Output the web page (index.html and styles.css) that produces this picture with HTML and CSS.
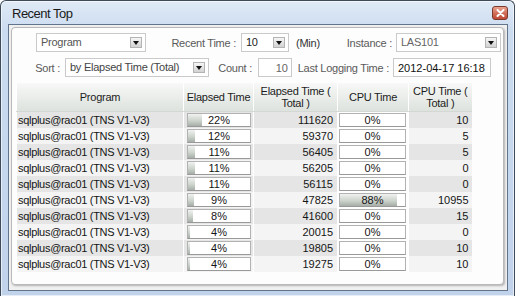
FILE: index.html
```
<!DOCTYPE html>
<html lang="en">
<head>
    <meta charset="UTF-8">
    <meta name="viewport" content="width=device-width, initial-scale=1.0">
    <title>Recent Top</title>
    <link rel="stylesheet" href="styles.css">
</head>
<body>
    <div class="window">
        <div class="titlebar">
            <span class="title">Recent Top</span>
            <span class="close-btn">
                <svg width="9" height="8" viewBox="0 0 9 8"><path d="M1.5 1 L7.5 7 M7.5 1 L1.5 7" stroke="#fff" stroke-width="2" stroke-linecap="round"/></svg>
            </span>
        </div>
        <div class="client">
            <div class="panel">
                <div class="filter-row">
                    <div class="select sel-type"><span>Program</span><i class="drop"></i></div>
                    <span class="label lbl-recent">Recent Time :</span>
                    <div class="select sel-time"><span class="dark">10</span><i class="drop"></i></div>
                    <span class="unit">(Min)</span>
                    <span class="label lbl-instance">Instance :</span>
                    <div class="select sel-instance"><span>LAS101</span><i class="drop"></i></div>
                </div>
                <div class="filter-row">
                    <span class="label lbl-sort">Sort :</span>
                    <div class="select sel-sort"><span>by Elapsed Time (Total)</span><i class="drop"></i></div>
                    <span class="label lbl-count">Count :</span>
                    <input class="field fld-count" type="text" value="10">
                    <span class="label lbl-logging">Last Logging Time :</span>
                    <input class="field fld-logging" type="text" value="2012-04-17 16:18">
                </div>
                <table class="grid">
                    <colgroup>
                        <col class="c-program">
                        <col class="c-elapsed">
                        <col class="c-elapsed-total">
                        <col class="c-cpu">
                        <col class="c-cpu-total">
                    </colgroup>
                    <thead>
                        <tr>
                            <th>Program</th>
                            <th>Elapsed Time</th>
                            <th>Elapsed Time (<br>Total )</th>
                            <th>CPU Time</th>
                            <th>CPU Time (<br>Total )</th>
                        </tr>
                    </thead>
                    <tbody>
                        <tr>
                            <td class="prog">sqlplus@rac01 (TNS V1-V3)</td>
                            <td class="pct"><div class="bar"><div class="bar-fill" style="width:22%"></div><span class="bar-text">22%</span></div></td>
                            <td class="num">111620</td>
                            <td class="pct cpu"><div class="bar"><div class="bar-fill" style="width:0%"></div><span class="bar-text">0%</span></div></td>
                            <td class="num last">10</td>
                        </tr>
                        <tr>
                            <td class="prog">sqlplus@rac01 (TNS V1-V3)</td>
                            <td class="pct"><div class="bar"><div class="bar-fill" style="width:12%"></div><span class="bar-text">12%</span></div></td>
                            <td class="num">59370</td>
                            <td class="pct cpu"><div class="bar"><div class="bar-fill" style="width:0%"></div><span class="bar-text">0%</span></div></td>
                            <td class="num last">5</td>
                        </tr>
                        <tr>
                            <td class="prog">sqlplus@rac01 (TNS V1-V3)</td>
                            <td class="pct"><div class="bar"><div class="bar-fill" style="width:11%"></div><span class="bar-text">11%</span></div></td>
                            <td class="num">56405</td>
                            <td class="pct cpu"><div class="bar"><div class="bar-fill" style="width:0%"></div><span class="bar-text">0%</span></div></td>
                            <td class="num last">5</td>
                        </tr>
                        <tr>
                            <td class="prog">sqlplus@rac01 (TNS V1-V3)</td>
                            <td class="pct"><div class="bar"><div class="bar-fill" style="width:11%"></div><span class="bar-text">11%</span></div></td>
                            <td class="num">56205</td>
                            <td class="pct cpu"><div class="bar"><div class="bar-fill" style="width:0%"></div><span class="bar-text">0%</span></div></td>
                            <td class="num last">0</td>
                        </tr>
                        <tr>
                            <td class="prog">sqlplus@rac01 (TNS V1-V3)</td>
                            <td class="pct"><div class="bar"><div class="bar-fill" style="width:11%"></div><span class="bar-text">11%</span></div></td>
                            <td class="num">56115</td>
                            <td class="pct cpu"><div class="bar"><div class="bar-fill" style="width:0%"></div><span class="bar-text">0%</span></div></td>
                            <td class="num last">0</td>
                        </tr>
                        <tr>
                            <td class="prog">sqlplus@rac01 (TNS V1-V3)</td>
                            <td class="pct"><div class="bar"><div class="bar-fill" style="width:9%"></div><span class="bar-text">9%</span></div></td>
                            <td class="num">47825</td>
                            <td class="pct cpu"><div class="bar"><div class="bar-fill" style="width:88%"></div><span class="bar-text">88%</span></div></td>
                            <td class="num last">10955</td>
                        </tr>
                        <tr>
                            <td class="prog">sqlplus@rac01 (TNS V1-V3)</td>
                            <td class="pct"><div class="bar"><div class="bar-fill" style="width:8%"></div><span class="bar-text">8%</span></div></td>
                            <td class="num">41600</td>
                            <td class="pct cpu"><div class="bar"><div class="bar-fill" style="width:0%"></div><span class="bar-text">0%</span></div></td>
                            <td class="num last">15</td>
                        </tr>
                        <tr>
                            <td class="prog">sqlplus@rac01 (TNS V1-V3)</td>
                            <td class="pct"><div class="bar"><div class="bar-fill" style="width:4%"></div><span class="bar-text">4%</span></div></td>
                            <td class="num">20015</td>
                            <td class="pct cpu"><div class="bar"><div class="bar-fill" style="width:0%"></div><span class="bar-text">0%</span></div></td>
                            <td class="num last">0</td>
                        </tr>
                        <tr>
                            <td class="prog">sqlplus@rac01 (TNS V1-V3)</td>
                            <td class="pct"><div class="bar"><div class="bar-fill" style="width:4%"></div><span class="bar-text">4%</span></div></td>
                            <td class="num">19805</td>
                            <td class="pct cpu"><div class="bar"><div class="bar-fill" style="width:0%"></div><span class="bar-text">0%</span></div></td>
                            <td class="num last">10</td>
                        </tr>
                        <tr>
                            <td class="prog">sqlplus@rac01 (TNS V1-V3)</td>
                            <td class="pct"><div class="bar"><div class="bar-fill" style="width:4%"></div><span class="bar-text">4%</span></div></td>
                            <td class="num">19275</td>
                            <td class="pct cpu"><div class="bar"><div class="bar-fill" style="width:0%"></div><span class="bar-text">0%</span></div></td>
                            <td class="num last">10</td>
                        </tr>
                    </tbody>
                </table>
            </div>
        </div>
    </div>
</body>
</html>
```

FILE: styles.css
```
body {
    margin: 0;
    font-family: "Liberation Sans", Arial, sans-serif;
    font-size: 11px;
    color: #151515;
}
.window {
    width: 515px;
    height: 296px;
    box-sizing: border-box;
    border: 1px solid #3d4b5b;
    border-bottom: none;
    border-radius: 6px 6px 0 0;
    background: linear-gradient(#e0eaf6, #cbdcf0 30px, #c0d3eb);
    box-shadow: inset 0 0 0 1px rgba(255, 255, 255, 0.6);
    padding: 0 6px 0 7px;
}
.titlebar {
    height: 23px;
    display: flex;
    justify-content: space-between;
    align-items: flex-start;
    padding-left: 4px;
}
.title {
    font-size: 13px;
    letter-spacing: -0.5px;
    line-height: 25px;
    color: #1a1a1a;
}
.close-btn {
    width: 16px;
    height: 14px;
    margin-top: 5px;
    box-sizing: border-box;
    border: 1px solid #7c3a2e;
    border-radius: 3px;
    background: linear-gradient(#eaa48f, #d2705b 50%, #bf4a36);
    display: flex;
    align-items: center;
    justify-content: center;
}
.client {
    border: 1px solid #62748a;
    background: #f0f0f0;
    padding: 2px 3px 5px 2px;
}
.panel {
    border: 1px solid #b9b9b9;
    border-radius: 4px;
    background: #fdfdfd;
    box-shadow: 1px 1px 2px rgba(0, 0, 0, 0.25);
    padding: 5px 0 12px 0;
}
.filter-row {
    display: flex;
    align-items: center;
    height: 19px;
    margin-bottom: 6px;
    letter-spacing: -0.25px;
}
.label {
    box-sizing: border-box;
    text-align: right;
    color: #5a5a5a;
    white-space: nowrap;
}
.select {
    position: relative;
    box-sizing: border-box;
    height: 19px;
    border: 1px solid #cacaca;
    background: #fff;
    color: #555;
    padding-left: 4px;
    line-height: 17px;
    white-space: nowrap;
}
.select .dark {
    color: #222;
}
.drop {
    position: absolute;
    right: 3px;
    top: 3px;
    width: 12px;
    height: 11px;
    box-sizing: border-box;
    border: 1px solid #b4b4b4;
    background: linear-gradient(#f6f6f6, #d2d2d2);
}
.drop::after {
    content: "";
    position: absolute;
    left: 2px;
    top: 3px;
    border-left: 3px solid transparent;
    border-right: 3px solid transparent;
    border-top: 4px solid #111;
}
.field {
    box-sizing: border-box;
    height: 19px;
    border: 1px solid #cacaca;
    background: #fff;
    font-family: "Liberation Sans", Arial, sans-serif;
    font-size: 11px;
    padding: 0 4px;
    margin: 0;
}
.sel-type { margin-left: 24px; width: 110px; }
.lbl-recent { width: 95px; padding-right: 5px; }
.sel-time { width: 48px; }
.unit { width: 51px; padding-left: 7px; box-sizing: border-box; color: #333; }
.lbl-instance { width: 56px; padding-right: 4px; }
.sel-instance { width: 105px; color: #666; }
.lbl-sort { width: 53px; padding-right: 5px; }
.sel-sort { width: 144px; color: #444; }
.lbl-count { width: 49px; padding-right: 6px; }
.fld-count { width: 34px; text-align: right; color: #666; padding-right: 3px; }
.lbl-logging { width: 101px; padding-right: 4px; }
.fld-logging { width: 98px; color: #111; }

.grid {
    border-collapse: collapse;
    table-layout: fixed;
    margin-left: 4px;
    width: 455px;
}
.c-program { width: 167px; }
.c-elapsed { width: 70px; }
.c-elapsed-total { width: 84px; }
.c-cpu { width: 71px; }
.c-cpu-total { width: 63px; }
.grid th {
    height: 28px;
    padding: 0;
    font-weight: normal;
    line-height: 12px;
    color: #1c1c1c;
    letter-spacing: -0.25px;
    background: linear-gradient(#f7f8f7, #dde2dd);
    border-left: 1px solid #fff;
    border-bottom: 1px solid #d4d8d4;
}
.grid td {
    height: 16px;
    padding: 0;
    line-height: 16px;
    white-space: nowrap;
    border-left: 1px solid #fff;
}
.grid tbody tr:nth-child(odd) td {
    background: #e5e5e5;
}
.grid tbody tr:nth-child(even) td {
    background: #f4f4f4;
}
.grid td.prog {
    padding-left: 1px;
    letter-spacing: -0.3px;
}
.grid td.num {
    text-align: right;
    padding-right: 4px;
}
.grid td.last {
    padding-right: 3px;
}
.grid td.pct {
    padding: 1px 2px 1px 3px;
    height: 14px;
}
.grid td.cpu {
    padding-left: 1px;
}
.grid tbody tr td.cpu {
    background: #fff;
}
.bar {
    position: relative;
    height: 14px;
    box-sizing: border-box;
    border: 1px solid #b2b2b2;
    border-bottom-color: #999;
    background: #fff;
}
.bar-fill {
    position: absolute;
    left: 0;
    top: 0;
    bottom: 0;
    background: linear-gradient(#f0f2f0, #cdd3cd 55%, #a7aea7);
}
.bar-text {
    position: relative;
    display: block;
    text-align: center;
    line-height: 12px;
    color: #151515;
}
```
